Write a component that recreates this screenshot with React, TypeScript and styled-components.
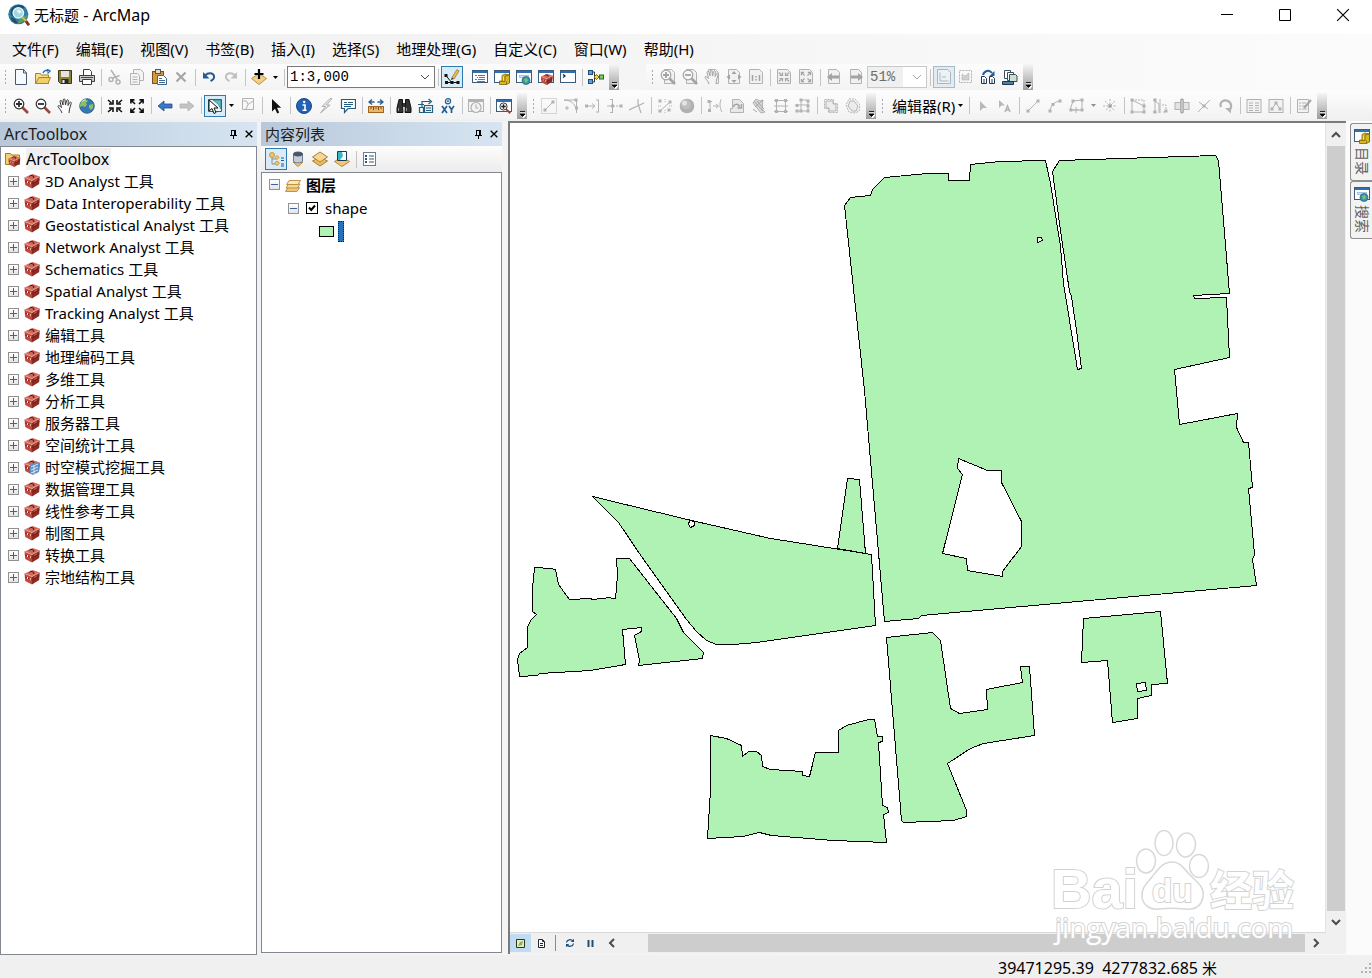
import React from "react";
import styled, { createGlobalStyle, css } from "styled-components";

/* ---------- Tokens ---------- */

const UI_FONT = `"Noto Sans", "Noto Sans CJK SC", sans-serif`;
const MONO_FONT = `"Liberation Mono", "Noto Sans CJK SC", monospace`;
const OFF = "#b2b2b2";
const NAVY = "#1f4e79";

const GlobalStyle = createGlobalStyle`
  *, *::before, *::after { box-sizing: border-box; }
  body { margin: 0; background: #f0f0f0; color: #000; font: 15px/22px ${UI_FONT}; }
  button, select, input { font: inherit; color: inherit; margin: 0; }
  button { padding: 0; border: 0; background: none; }
  ul { list-style: none; margin: 0; padding: 0; }
  svg { display: block; flex: none; }
`;

/* ---------- Icons ---------- */

const redBox = (
  <>
    <path d="M.5 4.500 8 7.500V15.500L1.200 12z" fill="#c1473b" />
    <path d="M8 7.500 15.700 3.500 15.200 11 8 15.500z" fill="#8f2a22" />
    <path d="M.5 4.500 8.500 1 15.700 3.500 8 7.500z" fill="#d3695c" />
    <path d="M.5 4.500 8 7.500 15.700 3.500" stroke="#ecaaa0" strokeWidth=".8" fill="none" />
    <path d="M1 8 8 11 15.500 6.800" stroke="#6d1a14" strokeWidth=".8" fill="none" />
    <path d="M5.500 3.700 6.500 2.300 9.800 3.200 9.500 5" stroke="#4a1712" fill="none" />
    <path d="M3.500 8v2M6.300 9.200v2" stroke="#f4ddd6" />
    <path d="m10 8.500 3-1.600" stroke="#c9746a" strokeWidth=".8" />
  </>
);
const windowFrame = (
  <>
    <rect x=".5" y="1.500" width="15" height="12" fill="#fff" stroke="#3c5a7c" />
    <rect x="1" y="2" width="14" height="2" fill="#2f6fb5" />
  </>
);
const offWindow = (
  <>
    <rect x=".5" y="1.500" width="15" height="12" fill="#f4f4f4" stroke={OFF} />
    <rect x="1" y="2" width="14" height="2" fill={OFF} />
  </>
);
const offPage = <path d="M4.500.5h7l3 3v11h-10z" fill="#f1f1f1" stroke={OFF} />;
const lens = (color: string, handle: string, plus: boolean) => (
  <>
    <path d="m9.500 9.500 5.500 5.500" stroke={handle} strokeWidth="2.600" />
    <circle cx="6" cy="6" r="4.800" fill="#f7f9fb" stroke={color} strokeWidth="1.200" />
    <path d={plus ? "M3 6h6M6 3v6" : "M3 6h6"} stroke={color} strokeWidth="1.800" />
  </>
);
const hand = (color: string, fill: string) => (
  <path
    d="M5 15 C4 12 2.500 11 1 8.500 C.8 7.300 2.300 7.200 3.300 8.500 L4.500 9.500 3 3.500C3 2 4.500 2 5 3.500L6 7 6.200 2C6.500.6 8 .6 8 2L8.500 7 9.600 2.500C10.200 1.200 11.500 1.700 11.300 3L11 7.500 12.800 4.500C13.700 3.600 14.800 4.500 14.200 5.600 L12.500 11 12 15"
    fill={fill}
    stroke={color}
  />
);
const arrowsIn = (color: string) => (
  <path
    d="M1 2l3.500 3M6 2v4H2M15 2l-3.500 3M10 2v4h4M1 14l3.500-3M6 14v-4H2M15 14l-3.500-3M10 14v-4h4"
    fill="none"
    stroke={color}
    strokeWidth="1.600"
  />
);
const arrowsOut = (color: string) => (
  <path
    d="M6 6 2.500 2.500M5.500 1.900H1.900v3.600M10 6l3.500-3.500M10.500 1.900h3.600v3.600M6 10l-3.500 3.500M5.500 14.100H1.900v-3.600M10 10l3.500 3.500M10.500 14.100h3.600v-3.600"
    fill="none"
    stroke={color}
    strokeWidth="1.600"
  />
);
const vertices = (points: number[][], color = OFF) => (
  <>
    {points.map(([x, y]) => (
      <rect key={`${x}-${y}`} x={x - 1.5} y={y - 1.5} width="3" height="3" fill={color} />
    ))}
  </>
);
const diamond = <path d="M8 15.500.5 9.500 8 4.500l7.500 5z" fill="#f3cf8b" stroke="#c08f3a" />;

const ICONS: Record<string, React.ReactNode> = {
  app: (
    <>
      <circle cx="7.500" cy="7.500" r="7.300" fill="#2d7fa8" />
      <path d="M2 4c3-4 8-4 10-2l-2 3-4 1-1 4-3-2z" fill="#1d4f70" />
      <path d="M2 10c2 0 4 1 5 4-3 0-4.500-2-5-4z" fill="#1d4f70" />
      <path d="M9 10l5-2c-1 4-4 6-7 6z" fill="#5ba456" />
      <circle cx="7.500" cy="6.500" r="3.800" fill="#9fd6e4" stroke="#e9f5f8" />
      <path d="M6 4.500c2-1 3.500 0 4 1.500l-2 1z" fill="#e6f6f9" />
      <path d="m10.500 9.500 3.500 4" stroke="#d9b45a" strokeWidth="1.500" />
      <path d="m13 12.500 2.300 3" stroke="#7d3326" strokeWidth="2" />
    </>
  ),
  page: <path d="M2.500.5h8l3 3.500v11.500h-11zM10.500.5V4h3" fill="#f6faff" stroke="#45586e" />,
  open: (
    <>
      <path d="M.5 14.500v-10h5l1 1.500h7v8.500z" fill="#f7df8d" stroke="#a5842b" />
      <path d="m.8 14.500 3-6h11.700l-2.500 6z" fill="#f3cf6a" stroke="#a5842b" />
      <path d="M8 4c1-2.500 3-3 5-2M12 .2l3 1.800-2.500 2.500" fill="none" stroke="#246fae" strokeWidth="1.400" />
    </>
  ),
  save: (
    <>
      <path d="M1.500 1.500h13v13h-11l-2-2z" fill="#8b8238" stroke="#37351f" />
      <rect x="4" y="2" width="8" height="6" fill="#e4e4da" />
      <rect x="4.500" y="10" width="7" height="4.500" fill="#282828" />
      <rect x="5.500" y="11" width="2" height="3" fill="#efefef" />
    </>
  ),
  print: (
    <>
      <path d="M4.500 6V.5h6l2 2V6" fill="#fff" stroke="#3d3d3d" />
      <path d="M.5 6.500h15v6h-15z" fill="#c9c9c9" stroke="#3d3d3d" />
      <path d="M3.500 10.500h9v5h-9z" fill="#fff" stroke="#3d3d3d" />
      <path d="M2 8.500h12" stroke="#4a4a4a" />
    </>
  ),
  cut: (
    <g fill="none" stroke={OFF} strokeWidth="1.500">
      <path d="M4 1l6.500 10M12.500 6.500 6 9" />
      <circle cx="4" cy="10.500" r="2" />
      <circle cx="11" cy="13" r="2" />
    </g>
  ),
  copy: (
    <g fill="#f4f4f4" stroke={OFF}>
      <path d="M4.500.5h7l3 3v8h-10z" />
      <path d="M1.500 4.500h7l2 2v9h-9zM3.500 8h5M3.500 10.500h5M3.500 13h5" />
    </g>
  ),
  paste: (
    <>
      <rect x="1.500" y="2.500" width="11" height="12" fill="#d29a3e" stroke="#77521b" />
      <rect x="4.500" y=".5" width="5" height="4" fill="#ddd" stroke="#555" />
      <path d="M6.500 6.500h6l3 3v6h-9z" fill="#fff" stroke="#3e6790" />
      <path d="M8 9.500h3M8 11.500h6M8 13.500h6" stroke="#3e6790" />
    </>
  ),
  remove: <path d="m3.500 3.500 9 9M12.500 3.500l-9 9" stroke="#a5a5a5" strokeWidth="2.200" />,
  undo: (
    <>
      <path d="M4 6.500c3-3 8-3 9 .5.400 2-1 4-3.500 5" fill="none" stroke="#255a94" strokeWidth="2" />
      <path d="M2 3v6.500h6.500z" fill="#255a94" />
    </>
  ),
  redo: (
    <>
      <path d="M12 6.500c-3-3-8-3-9 .5-.4 2 1 4 3.500 5" fill="none" stroke="#c0c0c0" strokeWidth="2" />
      <path d="M14 3v6.500H7.500z" fill="#c0c0c0" />
    </>
  ),
  addData: (
    <>
      {diamond}
      <path d="M8 0v10M3.500 5h9" stroke="#000" strokeWidth="2.200" />
    </>
  ),
  editor: (
    <>
      <path d="M2 6.500l5.500 7M2 13.500h12" fill="none" stroke="#111" />
      {vertices([[2, 6.5], [2.5, 13.5], [8, 13.5], [14, 13.5]], "#111")}
      <path d="m8 8.500 5-8 2 1.500L10 10z" fill="#f0c04c" stroke="#8a6a2a" strokeWidth=".7" />
      <path d="m7 11 .8-2.500 1.700 1.500z" fill="#222" />
    </>
  ),
  contents: (
    <>
      {windowFrame}
      <path d="M3 6.500h2M6 6.500h7M5 8.500h1M7 8.500h6M3 10.500h2M6 10.500h7M5 12.500h8" stroke="#398a9c" />
    </>
  ),
  catalog: (
    <>
      {windowFrame}
      <path d="M8 6.500 11 5l4.500 1v8l-3 1.500H5.500v-3.500H8z" fill="#d9b71e" stroke="#78650d" strokeWidth=".8" />
      <path d="M11 7v5.500H6.500M11 7l4-1M12.500 12.500v3" fill="none" stroke="#78650d" strokeWidth=".8" />
      <path d="M9 7.500h1v4H9z" fill="#f6e27a" />
    </>
  ),
  search: (
    <>
      {windowFrame}
      <rect x="3.500" y="6.500" width="9" height="2" fill="#cfe3f4" stroke="#8fb2d2" strokeWidth=".7" />
      <circle cx="10" cy="11.500" r="4" fill="#3a8fb0" stroke="#2c6c86" strokeWidth=".8" />
      <path d="M8 10l3-1 1 3-2.500 2z" fill="#7cc36a" />
    </>
  ),
  toolbox: (
    <>
      {windowFrame}
      <g transform="translate(2.500 4) scale(.78)">{redBox}</g>
    </>
  ),
  python: (
    <>
      {windowFrame}
      <path d="m3 5.500 2 1.500-2 1.500" fill="none" stroke="#111" strokeWidth="1.200" />
    </>
  ),
  model: (
    <>
      <path d="M3 3h3.500v10H3M6 8h8" fill="none" stroke="#333" />
      <rect x=".5" y="1.500" width="4" height="4" fill="#5d9de0" stroke="#1f4e79" />
      <rect x=".5" y="10.500" width="4" height="4" fill="#5d9de0" stroke="#1f4e79" />
      <path d="m8.500 5.500 2.500 2.500-2.500 2.500L6 8z" fill="#f4cf4b" stroke="#7b6315" />
      <rect x="11.500" y="6" width="4" height="4" fill="#7ccb63" stroke="#2b6b20" />
    </>
  ),
  pageZoomIn: (
    <>
      {offPage}
      {lens("#a3a3a3", "#a3a3a3", true)}
    </>
  ),
  pageZoomOut: (
    <>
      {offPage}
      {lens("#a3a3a3", "#a3a3a3", false)}
    </>
  ),
  pagePan: (
    <>
      {offPage}
      {hand("#a3a3a3", "#f4f4f4")}
    </>
  ),
  pageFull: (
    <>
      <path d="M2.500.5h8l3 3v11h-11z" fill="#f1f1f1" stroke={OFF} />
      <path d="M8 2l2.500 3h-5zM8 14l2.500-3h-5zM.5 8l3.500-2.500v5zM15.500 8 12 5.500v5z" fill="#a3a3a3" />
    </>
  ),
  pageOne: (
    <>
      <path d="M1.500.5h10l3 3v11h-13z" fill="#f1f1f1" stroke={OFF} />
      <path d="M4.500 6v6M11.500 6v6M8 7v1.500M8 10v1.500" stroke="#a3a3a3" strokeWidth="1.500" />
    </>
  ),
  pageIn: (
    <>
      <path d="M1.500.5h10l3 3v11h-13z" fill="#f1f1f1" stroke={OFF} />
      <g transform="translate(2 2) scale(.75)">{arrowsIn("#a3a3a3")}</g>
    </>
  ),
  pageOut: (
    <>
      <path d="M1.500.5h10l3 3v11h-13z" fill="#f1f1f1" stroke={OFF} />
      <g transform="translate(2 2) scale(.75)">{arrowsOut("#a3a3a3")}</g>
    </>
  ),
  pagePrev: (
    <>
      <path d="M2.500.5h8l3 3v11h-11z" fill="#f1f1f1" stroke={OFF} />
      <path d="M1 8l5-4v2.500h7v3H6V12z" fill="#a3a3a3" />
    </>
  ),
  pageNext: (
    <>
      <path d="M2.500.5h8l3 3v11h-11z" fill="#f1f1f1" stroke={OFF} />
      <path d="m15 8-5-4v2.500H3v3h7V12z" fill="#a3a3a3" />
    </>
  ),
  draft: (
    <>
      <path d="M1.500.5h10l3 3v11h-13z" fill="#edf2f5" stroke="#a9b6bf" />
      <path d="M4 3.500v8.500h8.500M6 8h4" fill="none" stroke="#a9b6bf" />
    </>
  ),
  focusFrame: (
    <>
      <rect x="1.500" y="1.500" width="12" height="12" fill="none" stroke={OFF} strokeDasharray="2 1" />
      <path d="M4 9V5l3 2 4-3v7H4z" fill="#cfcfcf" stroke={OFF} strokeDasharray="1 1" />
    </>
  ),
  changeLayout: (
    <>
      <path d="M3 6C4 2 9 0 12 4" fill="none" stroke="#245f9a" strokeWidth="2" />
      <path d="M14.500 2v5h-5z" fill="#245f9a" />
      <path d="M1.500 7.500h3l2 2v5h-5zM9.500 7.500h3l2 2v5h-5z" fill="#fff" stroke="#1d3752" />
      <path d="M3 11h2M3 13h2M11 11h2M11 13h2" stroke="#1d3752" />
    </>
  ),
  dataDriven: (
    <>
      <path d="M2.500 1.500h6v8h-6z" fill="#fff" stroke="#3b4d5e" />
      <path d="M5.500 3.500h6v8h-6z" fill="#fff" stroke="#3b4d5e" />
      <path d="M7.500 5.500h6l1.500 1.500v5.500H7.500z" fill="#cfe0cf" stroke="#3b4d5e" />
      <path d="M.5 12.500h11v3H.5z" fill="#4d7eae" stroke="#1d3752" />
    </>
  ),
  zoomIn: lens("#2e2e2e", "#96493a", true),
  zoomOut: lens("#2e2e2e", "#96493a", false),
  pan: hand("#3a3a3a", "#fff"),
  globe: (
    <>
      <circle cx="8" cy="8" r="7.300" fill="#3478ba" stroke="#27547f" strokeWidth=".8" />
      <path d="M3 3c3-2 5-1 6 0L7 5l1 2-2 2-3-1-2 1c-.5-2 .5-4 2-6zM10 7l4-1c1 3-.5 5-2 6l-2-2z" fill="#8cc05e" />
      <path d="M3 4c1-2 3-2.500 4-2" stroke="#d7ecfa" fill="none" />
    </>
  ),
  fixedIn: arrowsIn("#111"),
  fixedOut: arrowsOut("#111"),
  back: <path d="M1 8l6-5v3h8v4H7v3z" fill="#3b78c4" stroke="#1d4f91" strokeWidth=".8" />,
  forward: <path d="m15 8-6-5v3H1v4h8v3z" fill="#c3c3c3" stroke={OFF} strokeWidth=".8" />,
  selectFeatures: (
    <>
      <path d="M1.500 1.500h13v12h-13z" fill="#e6f3f3" stroke="#32606b" />
      <path d="M6 2h8v9l-3-5z" fill="#54c3c6" stroke="#32606b" strokeWidth=".6" />
      <path d="M2 2v11l3-2.500 2 5 2-1-2-4.500h4z" fill="#fff" stroke="#111" />
    </>
  ),
  clearSelection: <path d="M2.500.5h11v11h-11zM2.500 3h4l1.500 3.500 5-3.500M8 6.500l-2 4.500" fill="none" stroke={OFF} />,
  pointer: <path d="M4 1v12.500l3-2.800 2.200 4.800 2-1L9 9.800h4.200z" fill="#111" />,
  identify: (
    <>
      <circle cx="8" cy="8" r="7.500" fill="#2361b4" stroke="#174688" />
      <path d="M6.500 7H9v5M6.500 12.300h4" fill="none" stroke="#fff" strokeWidth="1.600" />
      <circle cx="8.200" cy="4" r="1.200" fill="#fff" />
    </>
  ),
  hyperlink: <path d="m12 .5-8 8h3.500L2.500 15l9.500-8H8.500L14 .5z" fill="#e6e6e6" stroke={OFF} />,
  htmlPopup: (
    <>
      <path d="M1.500 1.500h14v9H8l-3.500 4v-4h-3z" fill="#fff" stroke="#245b7f" strokeWidth="1.200" />
      <path d="M4 4.500h3M8 4.500h5M4 6.500h9M4 8.500h7" stroke="#245b7f" />
    </>
  ),
  measure: (
    <>
      <rect x=".5" y="8.500" width="15" height="6" fill="#e9b66b" stroke="#9c6622" />
      <path d="M3 9v2M5.500 9v3M8 9v2M10.500 9v3M13 9v2" stroke="#7c4a10" />
      <path d="M1 4h5.500M9.500 4H15M4 1.500 1 4l3 2.500M12 1.500 15 4l-3 2.500" fill="none" stroke="#245f9a" strokeWidth="1.400" />
    </>
  ),
  find: (
    <>
      <path d="M3 1.500h3.500V6l.5 8.500H1V10zM9.500 1.500H13L15 10v4.500H9L9.500 6z" fill="#333" stroke="#111" />
      <path d="M7 5h2v4H7z" fill="#333" />
      <path d="M2.500 10v3M10.500 10v3" stroke="#8c8c8c" />
    </>
  ),
  findRoute: (
    <g fill="none" stroke="#255f80" strokeWidth="1.200">
      <path d="M4 9V3.500h8M10.500 1l3 2.500-3 2.500M0 6.500h6" />
      <path d="M6.500 7.500h8v7h-8z" fill="#eaf4f8" />
      <path d="M1.500 9.500h4v5h-4zM8 10h5M8 12.500h5" />
    </g>
  ),
  goXY: (
    <g fill="none" stroke="#1f5f94">
      <circle cx="8" cy="3.200" r="2.600" strokeWidth="1.200" />
      <circle cx="8" cy="3.200" r=".7" />
      <path d="m2 8 5 7M7 8l-5 7M9 8l2.500 3.500L14 8M11.500 11.500V15" strokeWidth="1.700" />
    </g>
  ),
  time: (
    <>
      {offWindow}
      <circle cx="8" cy="9.500" r="5" fill="#f4f4f4" stroke={OFF} strokeWidth="1.200" />
      <path d="M8 6.500v3.500h2.500" fill="none" stroke={OFF} strokeWidth="1.200" />
    </>
  ),
  viewer: (
    <>
      {windowFrame}
      <g transform="translate(3 4) scale(.75)">{lens("#222", "#96493a", true)}</g>
    </>
  ),
  tSquare: (
    <>
      <rect x=".5" y=".5" width="15" height="15" fill="none" stroke={OFF} strokeDasharray="1 1" />
      <path d="M4 12 12 4" stroke={OFF} />
      {vertices([[4, 12], [12, 4]])}
    </>
  ),
  tFillet: (
    <>
      <path d="M1 2h12.500v13M1 2c6 0 10 3 12 8" fill="none" stroke={OFF} />
      <path d="M4 8v4M2 10h4" stroke={OFF} />
      {vertices([[13, 2], [13.5, 10]])}
    </>
  ),
  tExtend: (
    <>
      <path d="M1 8h8M7 5.500 10 8l-3 2.500M13.500 2v12M11 2h3M11 14h3" fill="none" stroke={OFF} />
      {vertices([[1.5, 8]])}
    </>
  ),
  tTrim: (
    <>
      <path d="M5.500 1v14M3 1.500h3M3 14.500h3M0 8h5" fill="none" stroke={OFF} />
      <path d="M6 8h9" stroke={OFF} strokeDasharray="2 1" />
      {vertices([[5.5, 8], [14, 8]])}
    </>
  ),
  tIntersect: <path d="M0 12 15 5M9 1v5l3 9" fill="none" stroke={OFF} strokeWidth="1.200" />,
  tExplode: (
    <>
      <path d="M8 1v3M8 12v3M1 8h3M12 8h3" stroke={OFF} strokeDasharray="1 1" />
      <path d="m3 13 10-9" stroke={OFF} />
      {vertices([[3, 3], [13, 4], [3, 13], [12, 12]])}
    </>
  ),
  sphere: (
    <>
      <circle cx="8" cy="8" r="7.300" fill="#b0b0b0" />
      <circle cx="7" cy="6.500" r="5" fill="#bebebe" />
      <circle cx="5.500" cy="5" r="2.600" fill="#e2e2e2" />
    </>
  ),
  tSplit: (
    <>
      <path d="M1 3.500h4M3 3.500v9M6 8h5M9 6l2.500 2L9 10M14 1.500c-1.500 4-1.500 8 1 12.500" fill="none" stroke={OFF} />
      {vertices([[2, 3.5], [2.5, 12.5]])}
    </>
  ),
  tRotatePage: (
    <>
      <path d="M3.500 1.500h7l4 4v9h-13v-4h2z" fill="#e8e8e8" stroke={OFF} />
      <path d="M4.500 9c0-3 5-4 6 0M12.500 6v4h-4" fill="none" stroke="#a3a3a3" strokeWidth="1.500" />
    </>
  ),
  tHatch: (
    <>
      <path d="M2 5 5 1l4 2 3-1-1 9 3 3-4 1L2 5" fill="#d9d9d9" stroke={OFF} />
      <path d="m3 3 9 10M6 3l7 8M2 11l4 3M12 2 4 9" stroke="#a3a3a3" />
    </>
  ),
  tBox: (
    <>
      <path d="M1 2.500h14M1 8h14M1 13.500h14M3.500 1v14M12.500 1v14" stroke={OFF} />
      {vertices([[3.5, 2.5], [12.5, 2.5], [3.5, 13.5], [12.5, 13.5]])}
    </>
  ),
  tGrid: (
    <>
      <path d="M6 1v13M13 3v11M2 7h12M2 13h12M6 2h6" stroke={OFF} fill="none" />
      {vertices([[6, 2], [13, 3], [2, 7.5], [6, 13], [13, 13], [2, 13], [13, 8]])}
    </>
  ),
  tUnion: (
    <>
      <path d="M1.500 1.500h9v9h-9zM5.500 5.500h9v9h-9z" fill="none" stroke={OFF} strokeDasharray="2 1" />
      <path d="M3 3h7v3h3v7H6v-3H3z" fill="#ececec" stroke={OFF} />
    </>
  ),
  tIntersection: (
    <>
      <path d="M4 1h6l5 6-1 6-4 2-6-1-3-7z" fill="none" stroke={OFF} strokeDasharray="2 1" />
      <path d="M5 3h4l4 5-2 5H7L3 8z" fill="#ececec" stroke={OFF} />
    </>
  ),
  editTool: <path d="M5 3v10l3-3h4z" fill="#b8b8b8" />,
  editAnno: (
    <>
      <path d="M2 2v8l2.500-2.500H8z" fill="#b8b8b8" />
      <path d="M8 14 10.500 8 13 14M9 12h3" fill="none" stroke={OFF} strokeWidth="1.500" />
    </>
  ),
  straight: (
    <>
      <path d="M3 13 13 3" stroke={OFF} />
      {vertices([[3, 13], [13, 3]])}
    </>
  ),
  arc: (
    <>
      <path d="M3 13C4 7 7 4 13 3" fill="none" stroke={OFF} />
      {vertices([[3, 13], [6, 6.5], [13, 3]])}
    </>
  ),
  trace: (
    <>
      <path d="M1 12 4 3l9-1v10H1M7 9v6M4 12h6" fill="none" stroke={OFF} />
      {vertices([[4, 3], [13, 2], [13, 12], [2, 12]])}
    </>
  ),
  point: (
    <>
      <path d="M8 1v14M1 8h14M3 3l10 10M13 3 3 13" stroke={OFF} strokeDasharray="2 1.500" />
      <rect x="6.500" y="6.500" width="3" height="3" fill="#9f9f9f" />
    </>
  ),
  editVertices: (
    <>
      <path d="M2 2v12h12V8z" fill="none" stroke={OFF} />
      <path d="M2 2h12v6" fill="none" stroke={OFF} strokeDasharray="2 1" />
      {vertices([[2, 2], [14, 8], [2, 14], [14, 14]])}
    </>
  ),
  reshape: (
    <>
      <path d="M1 2h2v12H1M3 3l4 3v9M8 1v14" fill="none" stroke={OFF} />
      <path d="M10 7h4v7h-4" fill="none" stroke={OFF} strokeDasharray="2 1" />
      {vertices([[3, 2], [3, 14], [14, 13]])}
    </>
  ),
  cutPolygon: (
    <>
      <rect x="1" y="4.500" width="14" height="7" fill="#e4e4e4" stroke={OFF} />
      <path d="M6.500 1.500h3v13h-3z" fill="#e4e4e4" stroke={OFF} />
      <path d="M8 0v16" stroke="#a3a3a3" />
    </>
  ),
  splitLine: (
    <>
      <path d="M2 14 14 2M3 4l9 7" stroke={OFF} />
      {vertices([[8, 8]])}
    </>
  ),
  rotate: (
    <>
      <path d="M3 9C1 4 6 1 10 3s4 7 1 9" fill="none" stroke={OFF} strokeWidth="2.200" />
      <path d="M7 10h6v5.500z" fill={OFF} />
    </>
  ),
  attributes: (
    <>
      <rect x="1" y="1.500" width="14" height="13" fill="#f2f2f2" stroke={OFF} />
      <path d="M3 5h4M9 5h4M3 7.500h4M9 7.500h4M3 10h4M9 10h4M3 12.500h4M9 12.500h4" stroke={OFF} />
    </>
  ),
  sketchProps: (
    <>
      <rect x="1" y="1.500" width="14" height="13" fill="#f2f2f2" stroke={OFF} />
      <path d="m4 11 4-6 4 6" fill="none" stroke={OFF} />
      {vertices([[4, 11], [8, 5], [12, 11]])}
    </>
  ),
  create: (
    <>
      <path d="M1.500 1.500h11v13h-11z" fill="#f2f2f2" stroke={OFF} />
      <path d="M3 5h2M6 5h4M3 8h2M6 8h3M3 11h2M6 11h5" stroke={OFF} />
      <path d="m8 10 7-8" stroke="#a3a3a3" strokeWidth="2" />
    </>
  ),
  listDrawing: (
    <>
      <path d="M4 6v7h4M4 8h4" fill="none" stroke="#8c8c8c" />
      <circle cx="4" cy="4" r="2.500" fill="#f2c468" stroke="#c39a4a" />
      <path d="M9 4.500l2 2-2 2-2-2zM9 10l2.500 2.200L9 14.500l-2.500-2.300z" fill="#f2c468" stroke="#c39a4a" />
      <path d="M13 7h3M13 9.500h3M13 13h3M13 15h3" stroke="#2d567e" />
    </>
  ),
  listSource: (
    <>
      <path d="M8 15.500 3 11h10z" fill="#f0c778" stroke="#b8862f" />
      <path d="M3.500 3v7c0 2.500 9 2.500 9 0V3z" fill="#c3ccd7" stroke="#6c7a8c" />
      <ellipse cx="8" cy="3" rx="4.500" ry="2" fill="#46566d" stroke="#49576a" />
    </>
  ),
  listVisible: (
    <>
      <path d="M8 15 .5 10 8 6l7.500 4z" fill="#e9bb63" stroke="#a97d33" />
      <path d="M8 11 .5 6 8 1l7.500 5z" fill="#f7d797" stroke="#a97d33" />
    </>
  ),
  listSelection: (
    <>
      <path d="M8 15.500.5 10.500 8 6l7.500 4.500z" fill="#f0c778" stroke="#b8862f" />
      <path d="M3.500.5h9v9h-9z" fill="#fff" stroke="#1b3b57" />
      <path d="M4 1h4l1 4-3 4H4z" fill="#35b7c4" />
    </>
  ),
  options: (
    <>
      <rect x="1.500" y="1.500" width="12" height="13" fill="#fff" stroke="#6f7c8a" />
      <path d="M7 5h5M7 8h5M7 11h5" stroke="#2d567e" />
      <path d="M4 4v2M4 7v2M4 10v2" stroke="#2d567e" strokeWidth="2" />
    </>
  ),
  layers: (
    <>
      <path d="M.5 14.500 3 10.500h11.500l-2.500 4z" fill="#f0c778" stroke="#b58a3b" strokeWidth=".9" />
      <path d="M1 11 3.500 7H15l-2.500 4z" fill="#f5d695" stroke="#b58a3b" strokeWidth=".9" />
      <path d="M1.500 7.500 4 3.500h11.500l-2.500 4z" fill="#fae6bb" stroke="#b58a3b" strokeWidth=".9" />
    </>
  ),
  redBox,
  blueBox: (
    <>
      {redBox}
      <path d="M6 6 12 3l4 2-1 8-6 3-3-2z" fill="#5f8fc4" />
      <path d="m7 8 7-3M7 11l7-3M7 14l7-3M10 6v9" stroke="#d6e6f5" />
    </>
  ),
  rootBox: (
    <>
      <path d="M.5 13.500V2.500h5l1 1.500h8v9.500z" fill="#f1d56b" stroke="#9d7f22" />
      <g transform="translate(3 4) scale(.78)">{redBox}</g>
    </>
  ),
};

type IconProps = { name: string; size?: number };
const Icon = ({ name, size = 16 }: IconProps) => (
  <svg width={size} height={size} viewBox="0 0 16 16" aria-hidden="true">
    {ICONS[name]}
  </svg>
);

/* ---------- Window chrome ---------- */

const Shell = styled.div`
  display: flex;
  flex-direction: column;
  height: 100vh;
  background: linear-gradient(90deg, #f0f0f0, #fbfbfb);
`;

const TitleBar = styled.header`
  display: flex;
  align-items: center;
  height: 34px;
  padding: 0 0 4px 8px;
  background: #fff;
`;

const WindowTitle = styled.h1`
  flex: 1;
  margin: 0 0 0 4px;
  font-size: 15px;
  font-weight: 400;
  white-space: pre;
`;

const CaptionButton = styled.button`
  display: grid;
  place-items: center;
  width: 58px;
  height: 30px;
`;

const MenuBar = styled.nav`
  display: flex;
  align-items: center;
  height: 30px;
  padding-left: 12px;
  gap: 17px;
`;

const MenuButton = styled.button`
  white-space: nowrap;
`;

const Latin = styled.span`
  font-size: 16px;
`;

/* ---------- Toolbars ---------- */

const ToolRow = styled.div<{ $height: number; $filled?: boolean }>`
  display: flex;
  align-items: center;
  height: ${(p) => p.$height}px;
  ${(p) => p.$filled && css`background: linear-gradient(#fdfdfd, #efefef);`}
`;

const ToolBar = styled.div<{ $indent?: number }>`
  display: flex;
  align-items: center;
  height: 26px;
  margin-left: ${(p) => p.$indent ?? 0}px;
  background: linear-gradient(#fcfcfc, #f3f3f3);
`;

const Grip = styled.span<{ $width: number }>`
  width: ${(p) => p.$width}px;
  height: 16px;
  background: radial-gradient(circle, #a9a9a9 1px, transparent 1px) right 3px top / 3px 4px repeat-y;
`;

const ToolButton = styled.button<{ $active?: boolean; $muted?: boolean }>`
  display: grid;
  place-items: center;
  flex: none;
  width: 22px;
  height: 22px;
  ${(p) => p.$active && css`
    background: ${p.$muted ? "#e3ebf0" : "#d9ebf7"};
    border: 1px solid ${p.$muted ? "#a6bccb" : "#2d7bb0"};
  `}
`;

const CaretButton = styled.button`
  display: grid;
  place-items: center;
  flex: none;
  width: 11px;
  height: 22px;
`;

const Separator = styled.span<{ $plain?: boolean }>`
  flex: none;
  width: 6px;
  height: 17px;
  background: linear-gradient(#c4c4c4, #c4c4c4) center / ${(p) => (p.$plain ? 0 : 1)}px 100% no-repeat;
`;

const OverflowButton = styled.button`
  display: flex;
  align-items: flex-end;
  justify-content: center;
  flex: none;
  width: 10px;
  height: 26px;
  margin-left: 2px;
  padding-bottom: 1px;
  background: linear-gradient(#f6f6f6, #9c9c9c);
`;

const EditorMenu = styled.button`
  margin-left: 5px;
  white-space: nowrap;
`;

const ComboBox = styled.div<{ $width: number }>`
  display: grid;
  flex: none;
  align-items: center;
  width: ${(p) => p.$width}px;
  height: 22px;
  > * { grid-area: 1 / 1; }
  > svg { justify-self: end; margin-right: 5px; pointer-events: none; }
`;

const ComboSelect = styled.select<{ $muted?: boolean }>`
  appearance: none;
  width: 100%;
  height: 22px;
  padding: 0 0 0 2px;
  border: 1px solid ${(p) => (p.$muted ? "#c9c9c9" : "#7a7a7a")};
  border-radius: 0;
  background: ${(p) => (p.$muted ? "linear-gradient(90deg, #f0f0f0 35px, #fff 35px)" : "#fff")};
  color: ${(p) => (p.$muted ? "#6d6d6d" : "#000")};
  font: 14px/20px ${MONO_FONT};
  opacity: 1;
`;

const Caret = ({ color = "#000" }: { color?: string }) => (
  <svg width="5" height="3" viewBox="0 0 5 3" aria-hidden="true">
    <path d="M0 0h5L2.500 3z" fill={color} />
  </svg>
);

const Chevron = ({ rotate = 0, color = "#4b4b4b", weight = 1.4 }: { rotate?: number; color?: string; weight?: number }) => (
  <svg width="10" height="10" viewBox="0 0 10 10" aria-hidden="true">
    <path d="m1 3 4 4 4-4" fill="none" stroke={color} strokeWidth={weight} transform={`rotate(${rotate} 5 5)`} />
  </svg>
);

const Overflow = () => (
  <OverflowButton aria-label="工具栏选项">
    <svg width="7" height="7" viewBox="0 0 7 7" aria-hidden="true">
      <path d="M1 2h6M2 4h5L4.500 7z" fill="#fff" stroke="#fff" />
      <path d="M1 .5h5M1 3h5L3.500 5.500z" fill="#000" stroke="#000" strokeWidth=".8" />
    </svg>
  </OverflowButton>
);

type Tool = { icon: string; label: string; active?: boolean; muted?: boolean } | "sep" | "gap" | "caret" | "offCaret";

const t = (icon: string, label: string): Tool => ({ icon, label });

const Tools = ({ items }: { items: Tool[] }) => (
  <>
    {items.map((item, i) => {
      if (item === "sep" || item === "gap") return <Separator key={i} $plain={item === "gap"} />;
      if (item === "caret" || item === "offCaret")
        return (
          <CaretButton key={i} aria-label="更多">
            <Caret color={item === "caret" ? "#000" : "#8f8f8f"} />
          </CaretButton>
        );
      return (
        <ToolButton key={i} aria-label={item.label} $active={item.active} $muted={item.muted}>
          <Icon name={item.icon} />
        </ToolButton>
      );
    })}
  </>
);

const STANDARD_A: Tool[] = [
  t("page", "新建"), t("open", "打开"), t("save", "保存"), t("print", "打印"), "sep",
  t("cut", "剪切"), t("copy", "复制"), t("paste", "粘贴"), t("remove", "删除"), "sep",
  t("undo", "撤消"), t("redo", "恢复"), "sep", t("addData", "添加数据"), "caret", "sep",
];
const STANDARD_B: Tool[] = [
  "sep", { icon: "editor", label: "编辑器工具条", active: true }, "gap",
  t("contents", "内容列表"), t("catalog", "目录"), t("search", "搜索"), t("toolbox", "工具箱"), t("python", "Python"),
  "sep", t("model", "模型构建器"),
];
const LAYOUT_A: Tool[] = [
  t("pageZoomIn", "放大页面"), t("pageZoomOut", "缩小页面"), t("pagePan", "平移页面"), t("pageFull", "缩放整个页面"),
  t("pageOne", "缩放至 100%"), "sep", t("pageIn", "固定比例放大"), t("pageOut", "固定比例缩小"), "sep",
  t("pagePrev", "返回范围"), t("pageNext", "前进至范围"),
];
const LAYOUT_B: Tool[] = [
  "sep", { icon: "draft", label: "切换描绘模式", active: true, muted: true }, t("focusFrame", "聚焦数据框"),
  t("changeLayout", "更改布局"), t("dataDriven", "数据驱动页面"),
];
const NAVIGATE: Tool[] = [
  t("zoomIn", "放大"), t("zoomOut", "缩小"), t("pan", "平移"), t("globe", "全图"), "sep",
  t("fixedIn", "固定放大"), t("fixedOut", "固定缩小"), "sep", t("back", "上一视图"), t("forward", "下一视图"), "sep",
  { icon: "selectFeatures", label: "选择要素", active: true }, "caret", t("clearSelection", "清除所选要素"), "sep",
  t("pointer", "选择元素"), "sep", t("identify", "识别"), t("hyperlink", "超链接"), t("htmlPopup", "HTML 弹出窗口"), "sep",
  t("measure", "测量"), "sep", t("find", "查找"), t("findRoute", "查找路径"), t("goXY", "转到 XY"), "sep",
  t("time", "时间滑块"), "sep", t("viewer", "创建查看器窗口"),
];
const ADVANCED: Tool[] = [
  t("tSquare", "复制要素"), t("tFillet", "内圆角"), t("tExtend", "延伸"), t("tTrim", "修剪"), t("tIntersect", "线相交"), "sep",
  t("tExplode", "拆分多部件"), t("sphere", "面片"), "sep", t("tSplit", "对齐至形状"), t("tRotatePage", "替换几何"),
  t("tHatch", "构造面"), t("tBox", "分割面"), t("tGrid", "打断相交线"), "sep", t("tUnion", "概化"), t("tIntersection", "平滑"),
];
const EDITOR: Tool[] = [
  "sep", t("editTool", "编辑工具"), t("editAnno", "编辑注记"), "sep", t("straight", "直线段"), t("arc", "弧段"),
  t("trace", "追踪"), "offCaret", t("point", "点"), "sep", t("editVertices", "编辑折点"), t("reshape", "整形要素"),
  t("cutPolygon", "裁剪面"), t("splitLine", "分割"), t("rotate", "旋转"), "sep", t("attributes", "属性"),
  t("sketchProps", "草图属性"), "sep", t("create", "创建要素"),
];

/* ---------- Dock panels ---------- */

const Workspace = styled.main`
  display: flex;
  flex: 1;
  min-height: 0;
`;

const DockPanel = styled.section<{ $width: number; $gap: number; $foot: number }>`
  display: flex;
  flex-direction: column;
  flex: none;
  width: ${(p) => p.$width}px;
  margin: 1px ${(p) => p.$gap}px ${(p) => p.$foot}px 0;
`;

const PanelHeader = styled.div`
  display: flex;
  align-items: center;
  height: 24px;
  padding: 0 0 0 4px;
  background: linear-gradient(90deg, #b8c8da, #d7e5f2);
`;

const PanelTitle = styled.h2`
  flex: 1;
  margin: 0;
  font-size: 15px;
  font-weight: 400;
  color: #1c1c1c;
`;

const PanelAction = styled.button`
  display: grid;
  place-items: center;
  width: 16px;
  height: 16px;
`;

const PanelTools = styled.div`
  display: flex;
  align-items: center;
  height: 26px;
  padding-left: 4px;
  background: linear-gradient(#fdfdfd, #ececec);
`;

const TreeBox = styled.div`
  flex: 1;
  min-height: 0;
  overflow: hidden;
  border: 1px solid #828790;
  background: #fff;
`;

const TreeRow = styled.li<{ $height: number; $indent: number }>`
  display: flex;
  align-items: center;
  height: ${(p) => p.$height}px;
  padding-left: ${(p) => p.$indent}px;
  white-space: nowrap;
`;

const Expander = styled.button`
  display: grid;
  place-items: center;
  width: 11px;
  height: 11px;
  margin-right: 5px;
  border: 1px solid #919191;
  background: linear-gradient(#fff, #e4e4e4);
`;

const TreeLabel = styled.span<{ $bold?: boolean; $shaded?: boolean }>`
  margin-left: 5px;
  padding-right: 2px;
  font-weight: ${(p) => (p.$bold ? 700 : 400)};
  background: ${(p) => (p.$shaded ? "#f0f0f0" : "none")};
`;

const ExpandToggle = ({ open, label }: { open?: boolean; label: string }) => (
  <Expander aria-label={label} aria-expanded={!!open}>
    <svg width="9" height="9" viewBox="0 0 9 9" aria-hidden="true" shapeRendering="crispEdges">
      <path d={open ? "M1 4.500h7" : "M1 4.500h7M4.500 1v7"} stroke="#3f5f9e" />
    </svg>
  </Expander>
);

const CheckLabel = styled.label`
  display: flex;
  align-items: center;
`;

const CheckFace = styled.span`
  display: grid;
  width: 12px;
  height: 12px;
  margin: 0 7px 0 2px;
  > * { grid-area: 1 / 1; }
  > svg { pointer-events: none; }
`;

const CheckInput = styled.input`
  appearance: none;
  width: 12px;
  height: 12px;
  border: 1px solid #000;
  background: #fff;
`;

const Symbol = styled.button`
  width: 15px;
  height: 11px;
  margin-right: 4px;
  border: 1px solid #000;
  background: #b0f2b4;
`;

const SymbolLabel = styled.span`
  width: 6px;
  height: 21px;
  border: 1px dotted #10212f;
  background: #2474bd;
`;

const PinIcon = () => (
  <svg width="9" height="9" viewBox="0 0 9 9" aria-hidden="true" shapeRendering="crispEdges">
    <path d="M2.500 5V.5h4V5M5.500 1v4M1 5.500h7M4.500 6v3" fill="none" stroke="#000" />
  </svg>
);

const CloseIcon = ({ size }: { size: number }) => (
  <svg width={size} height={size} viewBox="0 0 12 12" aria-hidden="true">
    <path d="m1 1 10 10M11 1 1 11" stroke="#000" strokeWidth={size > 10 ? 1 : 2} />
  </svg>
);

const PanelBar = ({ title }: { title: string }) => (
  <PanelHeader>
    <PanelTitle>{/^[A-Z]/.test(title) ? <Latin>{title}</Latin> : title}</PanelTitle>
    <PanelAction aria-label="自动隐藏"><PinIcon /></PanelAction>
    <PanelAction aria-label="关闭"><CloseIcon size={8} /></PanelAction>
  </PanelHeader>
);

const TOOLBOXES = [
  "3D Analyst 工具", "Data Interoperability 工具", "Geostatistical Analyst 工具", "Network Analyst 工具",
  "Schematics 工具", "Spatial Analyst 工具", "Tracking Analyst 工具", "编辑工具", "地理编码工具", "多维工具",
  "分析工具", "服务器工具", "空间统计工具", "时空模式挖掘工具", "数据管理工具", "线性参考工具", "制图工具",
  "转换工具", "宗地结构工具",
];

/* ---------- Map ---------- */

const MapFrame = styled.section`
  position: relative;
  display: grid;
  grid-template-columns: minmax(0, 1fr) 20px;
  grid-template-rows: minmax(0, 1fr) 21px;
  flex: 1;
  min-width: 0;
  margin: 0 4px 1px 0;
  border-top: 2px solid #7b7b7b;
  border-left: 2px solid #7b7b7b;
  background: #f0f0f0;
`;

const MapCanvas = styled.div`
  min-width: 0;
  overflow: hidden;
  border-right: 1px solid #e3e3e3;
  border-bottom: 1px solid #d9d9d9;
  background: #fff;
`;

const VerticalBar = styled.div`
  display: flex;
  flex-direction: column;
  padding: 1px 1px 0;
`;

const HorizontalBar = styled.div`
  display: flex;
  align-items: center;
  padding: 1px 0 2px;
`;

const ScrollButton = styled.button`
  display: grid;
  place-items: center;
  flex: none;
  width: 18px;
  height: 22px;
`;

const VerticalThumb = styled.div`
  flex: 1;
  background: #cdcdcd;
`;

const HorizontalThumb = styled.div`
  flex: 1;
  align-self: stretch;
  margin-left: 26px;
  background: #cdcdcd;
`;

const ViewButton = styled.button<{ $active?: boolean }>`
  display: grid;
  place-items: center;
  width: 21px;
  height: 18px;
  background: ${(p) => (p.$active ? "#bfdcf3" : "none")};
`;

const ViewDivider = styled.span`
  width: 1px;
  height: 16px;
  margin: 0 3px;
  background: #8c8c8c;
`;

const Watermark = styled.svg`
  position: absolute;
  right: 42px;
  bottom: 2px;
  pointer-events: none;
`;

const PARCELS = [
  "M844 205 850 197 870 195 872 189 884 177 927 173 948 173 948 180 969 180 970 164 1000 161 1045 160 1050 183 1060 246 1063 283 1077 369 1081 368 1076 330 1071 296 1069 291 1060 230 1052 171 1059 160 1215 155 1218 160 1229 293 1193 295 1194 298 1226 297 1229 357 1174 369 1179 424 1237 413 1236 427 1243 442 1248 442 1252 487 1248 488 1254 554 1252 559 1256 585 921 615 918 618 884 621 870 460 864 390ZM958 458 957 468 962 474 942 553 966 558 967 570 1002 576 1002 571 1021 546 1021 521 1001 482 1001 470 987 470ZM1037 237 1041 237 1042 240 1037 242Z",
  "M592 496 691 520 770 538 783 540 871 554 875 625 756 642 733 644 716 644 706 640 696 631 686 619 641 556 618 522ZM689 520 688 524 690 527 694 525 694 521Z",
  "M837 548 847 478 859 479 865 553Z",
  "M534 567 550 568 555 569 558 584 569 599 590 598 592 599 610 597 611 598 615 598 617 575 616 558 629 558 676 618 683 632 703 652 702 658 638 665 639 660 634 635 641 631 641 627 622 629 625 664 590 670 539 673 537 675 519 676 517 659 519 653 527 647 527 627 530 620 536 614 532 611 532 588Z",
  "M710 735 726 738 741 745 742 756 748 751 756 751 761 755 762 766 770 769 802 771 802 775 809 776 815 752 838 752 838 730 846 725 868 719 874 719 877 736 882 736 882 741 878 742 882 805 887 807 888 812 883 814 886 842 833 840 771 835 759 832 742 836 707 838 710 790Z",
  "M886 637 932 632 940 640 950 708 959 713 987 709 986 689 1022 682 1020 666 1029 666 1034 735 983 743 970 748 947 763 966 810 966 816 953 820 903 822 901 820Z",
  "M1083 618 1160 611 1167 683 1151 684 1151 695 1137 698 1137 718 1112 722 1107 660 1081 662ZM1136 683 1145 682 1146 690 1137 691Z",
];

const ParcelMap = () => (
  <svg width="100%" height="100%" role="img" aria-label="shape">
    <g
      transform="translate(-509.5 -122.5)"
      fill="#b0f2b4"
      fillRule="evenodd"
      stroke="#000"
      strokeWidth="1"
      shapeRendering="crispEdges"
    >
      {PARCELS.map((d) => <path key={d} d={d} />)}
    </g>
  </svg>
);

const BaiduMark = () => (
  <Watermark width="256" height="122" viewBox="0 0 256 122" aria-hidden="true">
    <g fill="#fff" fillOpacity=".85" stroke="#d8d8d8" strokeWidth="1.500">
      <ellipse cx="98" cy="31" rx="9.500" ry="12" />
      <ellipse cx="116" cy="13" rx="9" ry="12.500" />
      <ellipse cx="138" cy="15" rx="9.500" ry="12" transform="rotate(8 138 15)" />
      <ellipse cx="151" cy="36" rx="9.500" ry="11.500" />
      <path d="M124 32c9 0 12 7 18 13s15 12 13 22-9 13-18 12-18-1-26 0-16-3-17-12 5-14 10-20 10-15 20-15z" />
    </g>
    <g fill="#fff" stroke="#d3d3d3" strokeWidth="2" paintOrder="stroke" fontWeight="700">
      <text x="3" y="78" fontFamily="Liberation Sans, sans-serif" fontSize="56">Bai</text>
      <text x="104" y="72" fontFamily="Liberation Sans, sans-serif" fontSize="33">du</text>
      <text x="162" y="76" fontFamily="Noto Sans CJK SC, sans-serif" fontSize="42">经验</text>
    </g>
    <text
      x="7"
      y="108"
      fontFamily="Open Sans, sans-serif"
      fontSize="28"
      fill="#fff"
      stroke="#d3d3d3"
      strokeWidth="2"
      paintOrder="stroke"
    >
      jingyan.baidu.com
    </text>
  </Watermark>
);

/* ---------- Side tabs and status ---------- */

const SideTabs = styled.aside`
  display: flex;
  flex-direction: column;
  flex: none;
  width: 22px;
  padding-top: 2px;
`;

const SideTab = styled.button`
  display: flex;
  flex-direction: column;
  align-items: center;
  gap: 3px;
  height: 58px;
  padding-top: 4px;
  border: 1px solid #8e8e8e;
  border-right: 0;
  border-radius: 3px 0 0 3px;
  background: #f3f3f3;
  color: #5f5f5f;
  > span {
    writing-mode: vertical-rl;
    text-orientation: sideways;
    font-size: 14px;
    line-height: 20px;
  }
`;

const StatusBar = styled.footer`
  display: grid;
  grid-template-columns: minmax(0, 1fr) 374px;
  align-items: center;
  height: 23px;
  padding-top: 2px;
  background: #f0f0f0;
`;

const Coordinates = styled.output`
  grid-column: 2;
  display: flex;
  align-items: center;
  justify-content: space-between;
  white-space: pre;
`;

const ResizeGrip = () => (
  <svg width="12" height="12" viewBox="0 0 12 12" aria-hidden="true">
    <path d="M9 1h2v2H9zM5 5h2v2H5zM9 5h2v2H9zM1 9h2v2H1zM5 9h2v2H5zM9 9h2v2H9z" fill="#b3b3b3" />
  </svg>
);

const MENUS = ["文件(F)", "编辑(E)", "视图(V)", "书签(B)", "插入(I)", "选择(S)", "地理处理(G)", "自定义(C)", "窗口(W)", "帮助(H)"];

export default function App() {
  return (
    <Shell>
      <GlobalStyle />
      <TitleBar>
        <Icon name="app" size={22} />
        <WindowTitle>无标题<Latin> - ArcMap</Latin></WindowTitle>
        <CaptionButton aria-label="最小化">
          <svg width="12" height="12" viewBox="0 0 12 12" aria-hidden="true">
            <path d="M0 5.500h12" stroke="#000" />
          </svg>
        </CaptionButton>
        <CaptionButton aria-label="最大化">
          <svg width="12" height="12" viewBox="0 0 12 12" aria-hidden="true">
            <path d="M.5.5h11v11H.5z" fill="none" stroke="#000" />
          </svg>
        </CaptionButton>
        <CaptionButton aria-label="关闭"><CloseIcon size={14} /></CaptionButton>
      </TitleBar>

      <MenuBar aria-label="主菜单">
        {MENUS.map((m) => <MenuButton key={m}>{m}</MenuButton>)}
      </MenuBar>

      <ToolRow $height={26}>
        <ToolBar>
          <Grip $width={10} />
          <Tools items={STANDARD_A} />
          <ComboBox $width={148}>
            <ComboSelect aria-label="地图比例"><option>1:3,000</option></ComboSelect>
            <Chevron weight={1} />
          </ComboBox>
          <Tools items={STANDARD_B} />
          <Overflow />
        </ToolBar>
        <ToolBar $indent={27}>
          <Grip $width={11} />
          <Tools items={LAYOUT_A} />
          <ComboBox $width={60}>
            <ComboSelect aria-label="页面缩放" $muted disabled><option>51%</option></ComboSelect>
            <Chevron color="#a5a5a5" weight={1} />
          </ComboBox>
          <Tools items={LAYOUT_B} />
          <Overflow />
        </ToolBar>
      </ToolRow>

      <ToolRow $height={31} $filled>
        <ToolBar>
          <Grip $width={10} />
          <Tools items={NAVIGATE} />
          <Overflow />
        </ToolBar>
        <ToolBar>
          <Grip $width={11} />
          <Tools items={ADVANCED} />
          <Overflow />
        </ToolBar>
        <ToolBar>
          <Grip $width={11} />
          <EditorMenu>编辑器(R)</EditorMenu>
          <Tools items={["caret", ...EDITOR]} />
          <Overflow />
        </ToolBar>
      </ToolRow>

      <Workspace>
        <DockPanel $width={257} $gap={4} $foot={0}>
          <PanelBar title="ArcToolbox" />
          <TreeBox>
            <ul>
              <TreeRow $height={23} $indent={4}>
                <Icon name="rootBox" />
                <TreeLabel $shaded><Latin>ArcToolbox</Latin></TreeLabel>
              </TreeRow>
              {TOOLBOXES.map((name) => (
                <TreeRow key={name} $height={22} $indent={7}>
                  <ExpandToggle label={name} />
                  <Icon name={name === "时空模式挖掘工具" ? "blueBox" : "redBox"} />
                  <TreeLabel>{name}</TreeLabel>
                </TreeRow>
              ))}
            </ul>
          </TreeBox>
        </DockPanel>

        <DockPanel $width={241} $gap={6} $foot={2}>
          <PanelBar title="内容列表" />
          <PanelTools>
            <Tools
              items={[
                { icon: "listDrawing", label: "按绘制顺序列出", active: true },
                t("listSource", "按源列出"), t("listVisible", "按可见性列出"), t("listSelection", "按选择列出"),
                "sep", t("options", "选项"),
              ]}
            />
          </PanelTools>
          <TreeBox>
            <ul>
              <TreeRow $height={23} $indent={7}>
                <ExpandToggle open label="图层" />
                <Icon name="layers" />
                <TreeLabel $bold>图层</TreeLabel>
              </TreeRow>
              <TreeRow $height={24} $indent={26}>
                <ExpandToggle open label="shape" />
                <CheckLabel>
                  <CheckFace>
                    <CheckInput type="checkbox" defaultChecked />
                    <svg width="12" height="12" viewBox="0 0 12 12" aria-hidden="true">
                      <path d="m3 5.500 2.200 2.500L9 3.500" fill="none" stroke="#000" strokeWidth="2" />
                    </svg>
                  </CheckFace>
                  shape
                </CheckLabel>
              </TreeRow>
              <TreeRow $height={22} $indent={57}>
                <Symbol aria-label="符号" />
                <SymbolLabel />
              </TreeRow>
            </ul>
          </TreeBox>
        </DockPanel>

        <MapFrame>
          <MapCanvas><ParcelMap /></MapCanvas>
          <VerticalBar>
            <ScrollButton aria-label="向上滚动"><Chevron rotate={180} weight={2} /></ScrollButton>
            <VerticalThumb />
            <ScrollButton aria-label="向下滚动"><Chevron weight={2} /></ScrollButton>
          </VerticalBar>
          <HorizontalBar>
            <ViewButton $active aria-label="数据视图">
              <svg width="9" height="9" viewBox="0 0 9 9" aria-hidden="true">
                <path d="M.5.5h8v8h-8z" fill="#e8ecb8" stroke="#243a24" />
                <path d="m2 7 2-4 3-1-1 4z" fill="#8fae62" />
              </svg>
            </ViewButton>
            <ViewButton aria-label="布局视图">
              <svg width="9" height="9" viewBox="0 0 9 9" aria-hidden="true">
                <path d="M1.500.5h4l2 2v6h-6zM3 4.500h3M3 6.500h3M5.500.5v2h2" fill="#fff" stroke="#1d2a3a" />
              </svg>
            </ViewButton>
            <ViewDivider />
            <ViewButton aria-label="刷新视图">
              <svg width="10" height="10" viewBox="0 0 10 10" aria-hidden="true">
                <path d="M1.500 4.500C2 1.500 6 .8 8 3M8.500 5.500C8 8.500 4 9.200 2 7" fill="none" stroke={NAVY} strokeWidth="1.300" />
                <path d="M9 .8V4H5.800zM1 9.200V6h3.200z" fill={NAVY} />
              </svg>
            </ViewButton>
            <ViewButton aria-label="暂停绘制">
              <svg width="7" height="7" viewBox="0 0 7 7" aria-hidden="true">
                <path d="M1.500 0v7M5.500 0v7" stroke={NAVY} strokeWidth="2" />
              </svg>
            </ViewButton>
            <ViewButton aria-label="向左滚动"><Chevron rotate={90} weight={2} /></ViewButton>
            <HorizontalThumb />
            <ViewButton aria-label="向右滚动"><Chevron rotate={-90} weight={2} /></ViewButton>
          </HorizontalBar>
          <BaiduMark />
        </MapFrame>

        <SideTabs>
          <SideTab><Icon name="catalog" /><span>目录</span></SideTab>
          <SideTab><Icon name="search" /><span>搜索</span></SideTab>
        </SideTabs>
      </Workspace>

      <StatusBar>
        <Coordinates>
          <span><Latin>39471295.39  4277832.685 </Latin>米</span>
          <ResizeGrip />
        </Coordinates>
      </StatusBar>
    </Shell>
  );
}
